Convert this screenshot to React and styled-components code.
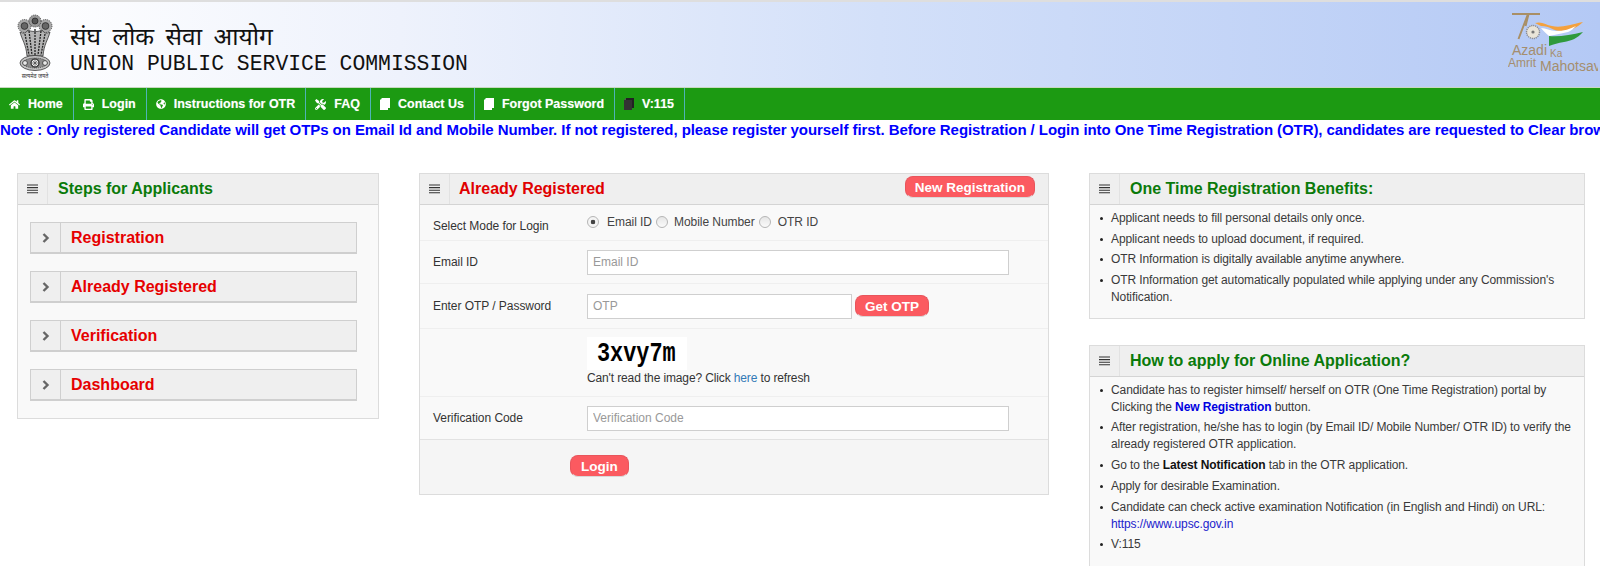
import React from "react";
import styled, { createGlobalStyle } from "styled-components";
import { FaHome, FaPrint, FaGlobeAmericas, FaTools } from "react-icons/fa";

const Global = createGlobalStyle`
  html, body { margin: 0; padding: 0; background: #fff; }
  body { width: 1600px; height: 566px; overflow: hidden; font-family: "Liberation Sans", Arial, sans-serif; font-size: 12px; color: #333; }
  * { box-sizing: border-box; }
`;

const Header = styled.header`
  height: 87px; display: flex; align-items: flex-start; justify-content: space-between;
  border-top: 2px solid #dedede;
  background: linear-gradient(90deg, #ffffff 0%, #eef2fc 25%, #d3e0f9 55%, #b4c9f5 100%);
`;
const Brand = styled.div`display: flex; align-items: flex-start; padding: 12px 0 0 17px;`;
const BrandText = styled.div`margin-left: 17px; padding-top: 11px; color: #111;`;
const Hindi = styled.div`font-family: "Noto Sans Devanagari", "Lohit Devanagari", "Noto Sans", "Liberation Sans", sans-serif; font-size: 24.5px; line-height: 29px; word-spacing: 5px; white-space: nowrap;`;
const English = styled.div`font-family: "Liberation Mono", monospace; font-size: 21.4px; line-height: 24px; margin-top: -2px; white-space: nowrap;`;
const LogoWrap = styled.div`padding: 10px 2px 0 0;`;

const Nav = styled.nav`height: 33px; background: #1c9a12; display: flex; border-top: 1px solid #c8d8c0;`;
const NavItem = styled.a`
  display: flex; align-items: center; gap: 8px; padding: 0 10px 0 9px; color: #fff; font-weight: bold; font-size: 12.5px;
  border-right: 1px solid #4fb3b8; white-space: nowrap; text-shadow: 0 0 1px rgba(255,255,255,.4);
  svg { display: block; flex: none; }
`;

const Ticker = styled.div`
  height: 24px; line-height: 20px; color: #0000ff; font-weight: bold; font-size: 15px; white-space: nowrap; overflow: hidden; letter-spacing: -.07px;
`;

const Columns = styled.main`
  display: grid; grid-template-columns: 362px 630px 496px; column-gap: 40px; align-items: start; padding: 29px 0 0 17px;
`;
const Stack = styled.div`display: flex; flex-direction: column; gap: 26px;`;
const Panel = styled.section`background: #f9f9f9; border: 1.5px solid #dcdcdc; position: relative;`;
const PanelHead = styled.div`height: 31px; display: flex; background: #efefef; border-bottom: 1px solid #d4d4d4;`;
const IconCell = styled.div`
  width: 30px; flex: none; display: flex; align-items: center; justify-content: center; border-right: 1px solid #e2e2e2; color: #444;
`;
const PanelTitle = styled.h2`
  margin: 0; padding-left: ${p => p.$pad || 10}px; font-size: 16px; line-height: 29px; font-weight: bold; color: ${p => p.$color};
`;
const StepsBody = styled.div`padding: 17px 21px 17px 12px; display: flex; flex-direction: column; gap: 17px;`;
const StepRow = styled.div`
  height: 32px; display: flex; background: #efefef; border: 1px solid #cfcfcf; border-bottom-width: 2px;
`;
const StepIcon = styled.div`width: 30px; flex: none; display: flex; align-items: center; justify-content: center; border-right: 1px solid #cfcfcf;`;
const StepTitle = styled.div`padding-left: 10px; color: #e60000; font-weight: bold; font-size: 16px; line-height: 30px;`;

const RedButton = styled.button`
  height: 22px; padding: 0 ${p => p.$pad || 10}px; border: 1px solid #e8555c; border-bottom-color: #d9d9d9; border-radius: 8px; background: #fb5a60; color: #fff;
  font: bold 13.5px "Liberation Sans", Arial, sans-serif; flex: none; white-space: nowrap;
`;
const HeadButton = styled(RedButton)`position: absolute; top: 2px; right: 13px;`;
const FormRow = styled.div`
  height: ${p => p.$h}px; display: flex; align-items: ${p => p.$top ? "flex-start" : "center"}; border-bottom: 1px solid #efefef; padding-left: 13px;
`;
const Label = styled.label`width: 154px; flex: none; letter-spacing: -.05px; ${p => p.$down ? "padding-top: 7px;" : ""}`;
const Radios = styled.div`display: flex; align-items: center; height: 30px; margin-top: -1px;`;
const Radio = styled.span`
  width: 12px; height: 12px; border-radius: 50%; border: 1px solid #b5b5b5; margin-left: ${p => p.$ml}px; flex: none;
  background: ${p => p.$on ? "radial-gradient(circle, #444 0 2px, #f4f4f4 2.6px)" : "linear-gradient(#e6e6e6, #fafafa)"};
`;
const RadioText = styled.span`margin-left: ${p => p.$ml}px; color: #444; white-space: nowrap; letter-spacing: -.05px;`;
const Input = styled.input`
  width: ${p => p.$w}px; height: 25px; flex: none; border: 1px solid #cfcfcf; background: #fff; padding: 0 5px; font: 12px "Liberation Sans", Arial, sans-serif; color: #333;
  &::placeholder { color: #999; opacity: 1; }
`;
const OtpButton = styled(RedButton)`margin-left: 3px;`;
const CaptchaBox = styled.div`margin-left: 154px; padding-top: 8px;`;
const Captcha = styled.div`
  width: 100px; height: 33px; background: #fff; overflow: hidden; padding-left: 10px;
`;
const CaptchaText = styled.span`
  display: inline-block; color: #000; font: bold 28px/33px "Liberation Mono", monospace; transform: scaleX(.78); transform-origin: left center; white-space: nowrap;
`;
const Caption = styled.div`margin-top: 0; line-height: 16px; letter-spacing: -.13px;`;
const Link = styled.a`color: #337ab7;`;
const FormFoot = styled.div`height: 55px; background: #f5f5f5; border-top: 1px solid #e2e2e2; padding: 15px 0 0 150px; margin-top: -1px;`;

const List = styled.ul`margin: 0; padding: ${p => p.$pad}; list-style: none; font-size: 12px; line-height: 17px; color: #3a3a3a; letter-spacing: -.1px;`;
const Item = styled.li`
  position: relative; margin-bottom: 3.7px;
  &::before { content: ""; position: absolute; left: -11px; top: 7px; width: 3px; height: 3px; border-radius: 50%; background: #222; }
`;
const BlueBold = styled.b`color: #0000e0;`;
const DarkBold = styled.b`color: #111;`;
const UrlLink = styled.a`color: #2222cc;`;

const Bars = () => (
  <svg width="11" height="10" viewBox="0 0 11 10" aria-hidden="true">
    <path d="M0 1h11M0 3.6h11M0 6.2h11M0 8.8h11" stroke="#333" strokeWidth="1.1" fill="none" />
  </svg>
);
const Chevron = () => (
  <svg width="8" height="10" viewBox="0 0 8 10" aria-hidden="true">
    <path d="M1.5 1l4 4-4 4" stroke="#666" strokeWidth="2.4" fill="none" />
  </svg>
);
const Book = ({ dark }) => (
  <svg width="10" height="12" viewBox="0 0 10 12" aria-hidden="true">
    <path d="M2 0h8v10H2z" fill={dark ? "#222" : "#fff"} />
    <path d="M0 2l2-2v10l-2 2z" fill={dark ? "#555" : "#dfe"} />
    <path d="M0 2h8v10H0z" fill={dark ? "#333" : "#fff"} />
  </svg>
);

const Emblem = () => (
  <svg width="36" height="66" viewBox="0 0 36 66" aria-hidden="true">
    <g stroke="#222" strokeWidth=".7">
      <circle cx="7.5" cy="12" r="6.5" fill="#a8a8a8" strokeDasharray="1.2 .9" />
      <circle cx="28.5" cy="12" r="6.5" fill="#a8a8a8" strokeDasharray="1.2 .9" />
      <circle cx="18" cy="7" r="6" fill="#999" strokeDasharray="1.2 .9" />
      <circle cx="7.5" cy="12" r="3.4" fill="#666" />
      <circle cx="28.5" cy="12" r="3.4" fill="#666" />
      <circle cx="18" cy="7" r="3" fill="#555" />
      <path d="M3 18c2 8 6 12 7 24h16c1-12 5-16 7-24-4 2-6 1-8-2-3 2-11 2-14 0-2 3-4 4-8 2z" fill="#b4b4b4" />
      <path d="M8 20l4 21M12 17l3 24M18 15v26M24 17l-3 24M28 20l-4 21" strokeWidth="1.3" strokeDasharray="2 1" fill="none" />
      <ellipse cx="18" cy="49" rx="15" ry="7.5" fill="#c4c4c4" />
      <ellipse cx="18" cy="49" rx="12" ry="5" fill="#8c8c8c" strokeDasharray="1 1" />
      <circle cx="18" cy="49" r="4" fill="#eee" strokeWidth="1.1" />
      <path d="M18 45v8M14 49h8M15 46l6 6M21 46l-6 6" strokeWidth=".5" />
      <circle cx="8" cy="49" r="2.4" fill="#e8e8e8" />
      <circle cx="28" cy="49" r="2.4" fill="#e8e8e8" />
    </g>
    <text x="18" y="63.5" fontSize="5.5" textAnchor="middle" fill="#333" fontFamily="'Noto Sans Devanagari','Noto Sans',sans-serif">सत्यमेव जयते</text>
  </svg>
);

const Logo = () => (
  <svg width="90" height="62" viewBox="0 0 90 62" aria-hidden="true">
    <path d="M4 2h16L10.5 27" fill="none" stroke="#a98f66" strokeWidth="2" />
    <path d="M21 2h11M20.5 2l-3 12" fill="none" stroke="#a98f66" strokeWidth="2" />
    <circle cx="25" cy="20" r="6.5" fill="#e9e4d8" stroke="#8a8a90" strokeWidth="1.4" strokeDasharray="1.2 .8" />
    <circle cx="25" cy="20" r="1.6" fill="#777" />
    <path d="M27 11c7-2 11 2 17 3 9 2 17-1 31-4-5 5-12 9-22 9-8 0-11-5-20-5z" fill="#f4a13e" />
    <path d="M33 16c5 0 9 3 15 3 8 0 14-2 20-5-3 3-5 5-8 6-6 1-12 3-19 4-3-3-6-5-8-8z" fill="#ffffff" />
    <path d="M41 24c10 1 22-1 34-4-5 6-12 9-19 10-6 1-10 2-15 4z" fill="#2f9a3c" />
    <text x="4" y="43" fontFamily="'Liberation Sans',sans-serif" fontSize="14" fill="#a58e6e">Azadi</text>
    <text x="42" y="45" fontFamily="'Liberation Sans',sans-serif" fontSize="10" fill="#a58e6e">Ka</text>
    <text x="0" y="55" fontFamily="'Liberation Sans',sans-serif" fontSize="12" fill="#a58e6e">Amrit</text>
    <text x="32" y="59" fontFamily="'Liberation Sans',sans-serif" fontSize="14" fill="#a58e6e">Mahotsav</text>
  </svg>
);

const navItems = [
  { icon: <FaHome size={11} />, label: "Home" },
  { icon: <FaPrint size={11} />, label: "Login" },
  { icon: <FaGlobeAmericas size={10} />, label: "Instructions for OTR" },
  { icon: <FaTools size={11} />, label: "FAQ" },
  { icon: <Book />, label: "Contact Us" },
  { icon: <Book />, label: "Forgot Password" },
  { icon: <Book dark />, label: "V:115" },
];
const steps = ["Registration", "Already Registered", "Verification", "Dashboard"];

export default function App() {
  return (
    <>
      <Global />
      <Header>
        <Brand>
          <Emblem />
          <BrandText>
            <Hindi>संघ लोक सेवा आयोग</Hindi>
            <English>UNION PUBLIC SERVICE COMMISSION</English>
          </BrandText>
        </Brand>
        <LogoWrap><Logo /></LogoWrap>
      </Header>
      <Nav>
        {navItems.map(n => <NavItem key={n.label}>{n.icon}{n.label}</NavItem>)}
      </Nav>
      <Ticker>Note : Only registered Candidate will get OTPs on Email Id and Mobile Number. If not registered, please register yourself first. Before Registration / Login into One Time Registration (OTR), candidates are requested to Clear browser cache</Ticker>
      <Columns>
        <Panel>
          <PanelHead>
            <IconCell><Bars /></IconCell>
            <PanelTitle $color="#0a7a0a">Steps for Applicants</PanelTitle>
          </PanelHead>
          <StepsBody>
            {steps.map(s => (
              <StepRow key={s}>
                <StepIcon><Chevron /></StepIcon>
                <StepTitle>{s}</StepTitle>
              </StepRow>
            ))}
          </StepsBody>
        </Panel>
        <Panel>
          <PanelHead>
            <IconCell><Bars /></IconCell>
            <PanelTitle $color="#e00000" $pad={9}>Already Registered</PanelTitle>
            <HeadButton $pad={9}>New Registration</HeadButton>
          </PanelHead>
          <FormRow $h={36}>
            <Label $down>Select Mode for Login</Label>
            <Radios>
              <Radio $on $ml={0} />
              <RadioText $ml={8}>Email ID</RadioText>
              <Radio $ml={4} />
              <RadioText $ml={6}>Mobile Number</RadioText>
              <Radio $ml={4} />
              <RadioText $ml={7}>OTR ID</RadioText>
            </Radios>
          </FormRow>
          <FormRow $h={43}>
            <Label>Email ID</Label>
            <Input $w={422} placeholder="Email ID" readOnly />
          </FormRow>
          <FormRow $h={45}>
            <Label>Enter OTP / Password</Label>
            <Input $w={265} placeholder="OTP" readOnly />
            <OtpButton $pad={9}>Get OTP</OtpButton>
          </FormRow>
          <FormRow $h={68} $top>
            <CaptchaBox>
              <Captcha><CaptchaText>3xvy7m</CaptchaText></Captcha>
              <Caption>Can't read the image? Click <Link>here</Link> to refresh</Caption>
            </CaptchaBox>
          </FormRow>
          <FormRow $h={43}>
            <Label>Verification Code</Label>
            <Input $w={422} placeholder="Verification Code" readOnly />
          </FormRow>
          <FormFoot><RedButton $pad={10}>Login</RedButton></FormFoot>
        </Panel>
        <Stack>
          <Panel>
            <PanelHead>
              <IconCell><Bars /></IconCell>
              <PanelTitle $color="#0a7a0a">One Time Registration Benefits:</PanelTitle>
            </PanelHead>
            <List $pad="5px 12px 8px 21px">
              <Item>Applicant needs to fill personal details only once.</Item>
              <Item>Applicant needs to upload document, if required.</Item>
              <Item>OTR Information is digitally available anytime anywhere.</Item>
              <Item>OTR Information get automatically populated while applying under any Commission's Notification.</Item>
            </List>
          </Panel>
          <Panel>
            <PanelHead>
              <IconCell><Bars /></IconCell>
              <PanelTitle $color="#0a7a0a">How to apply for Online Application?</PanelTitle>
            </PanelHead>
            <List $pad="5px 12px 16px 21px">
              <Item>Candidate has to register himself/ herself on OTR (One Time Registration) portal by Clicking the <BlueBold>New Registration</BlueBold> button.</Item>
              <Item>After registration, he/she has to login (by Email ID/ Mobile Number/ OTR ID) to verify the already registered OTR application.</Item>
              <Item>Go to the <DarkBold>Latest Notification</DarkBold> tab in the OTR application.</Item>
              <Item>Apply for desirable Examination.</Item>
              <Item>Candidate can check active examination Notification (in English and Hindi) on URL: <UrlLink>https://www.upsc.gov.in</UrlLink></Item>
              <Item>V:115</Item>
            </List>
          </Panel>
        </Stack>
      </Columns>
    </>
  );
}
